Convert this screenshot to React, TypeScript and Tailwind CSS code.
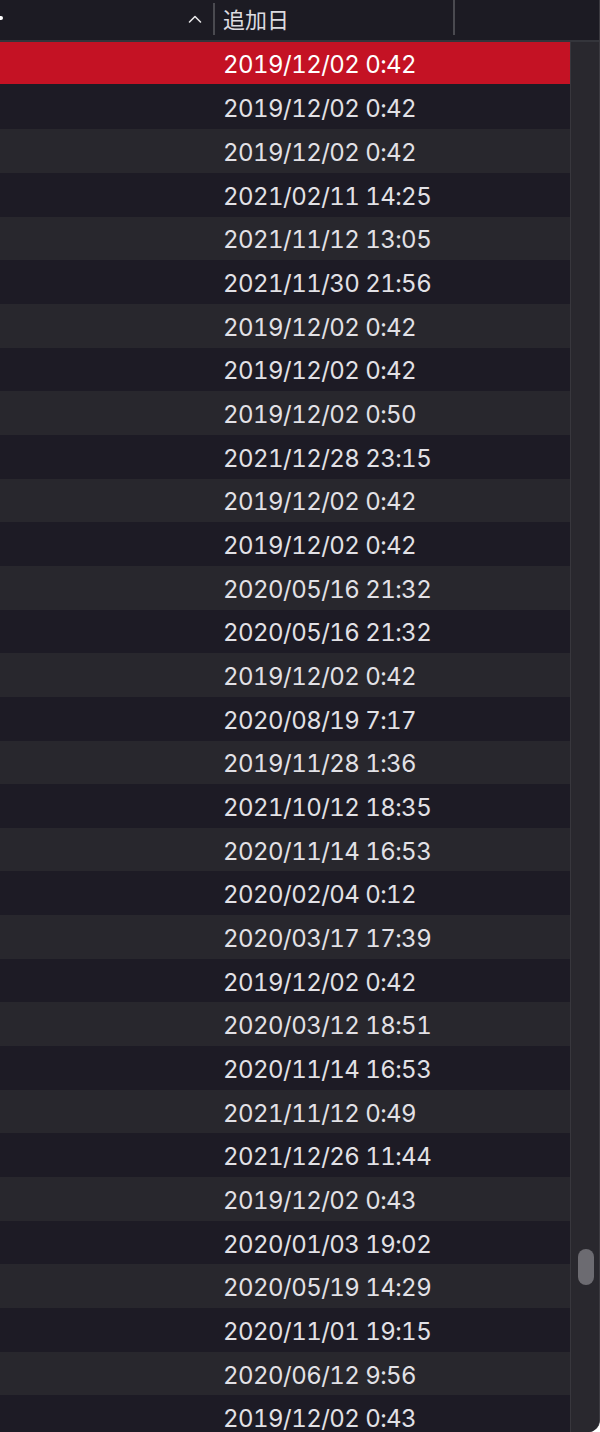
import React from 'react'

const DATES = [
  '2019/12/02 0:42',
  '2019/12/02 0:42',
  '2019/12/02 0:42',
  '2021/02/11 14:25',
  '2021/11/12 13:05',
  '2021/11/30 21:56',
  '2019/12/02 0:42',
  '2019/12/02 0:42',
  '2019/12/02 0:50',
  '2021/12/28 23:15',
  '2019/12/02 0:42',
  '2019/12/02 0:42',
  '2020/05/16 21:32',
  '2020/05/16 21:32',
  '2019/12/02 0:42',
  '2020/08/19 7:17',
  '2019/11/28 1:36',
  '2021/10/12 18:35',
  '2020/11/14 16:53',
  '2020/02/04 0:12',
  '2020/03/17 17:39',
  '2019/12/02 0:42',
  '2020/03/12 18:51',
  '2020/11/14 16:53',
  '2021/11/12 0:49',
  '2021/12/26 11:44',
  '2019/12/02 0:43',
  '2020/01/03 19:02',
  '2020/05/19 14:29',
  '2020/11/01 19:15',
  '2020/06/12 9:56',
  '2019/12/02 0:43',
]

function Row({ date, index }: { date: string; index: number }) {
  if (index === 0) {
    return (
      <div className="h-[43.67px] shrink-0 bg-[#1d1b25]">
        <div className="h-[41.6px] bg-[#c41224] flex items-center pl-[223px] pt-[4px] text-white">
          {date}
        </div>
      </div>
    )
  }
  return (
    <div
      className={`h-[43.67px] shrink-0 flex items-center pl-[223px] pt-[4px] text-[#e2e1e6] ${
        index % 2 === 0 ? 'bg-[#28272d]' : 'bg-[#1d1b25]'
      }`}>
      {date}
    </div>
  )
}

export default function App() {
  return (
    <div
      className="w-[600px] h-[1432px] overflow-hidden flex flex-col bg-[#1c1b23] rounded-br-[12px] border-r border-[#3c3b41]"
      style={{ fontFamily: 'Inter, "Noto Sans CJK JP", sans-serif' }}>
      {/* header */}
      <div className="h-[42px] shrink-0 flex items-start border-b-2 border-[#34353b] bg-[#1c1b23]">
        <div className="w-[213px] h-[35px] flex items-center justify-between relative">
          <span className="block w-[3px] h-[4px] bg-white rounded-r-full ml-0" />
          <svg width="14" height="10" viewBox="0 0 14 10" className="mr-[11px] mt-[2px]">
            <path d="M1.5 8 L7 2.5 L12.5 8" stroke="#e6e6e8" strokeWidth="1.6" fill="none" strokeLinecap="round" strokeLinejoin="round" />
          </svg>
        </div>
        <div className="w-[2px] h-[32px] mt-[3px] bg-[#4a4a50]" />
        <div className="w-[238px] h-[40px] flex items-center pl-[8px] text-[22px] text-[#dcdbe0]">追加日</div>
        <div className="w-[2px] h-[35px] bg-[#4a4a50]" />
        <div className="flex-1" />
      </div>

      {/* body */}
      <div className="flex flex-1 min-h-0">
        <div className="w-[570px] flex flex-col text-[24px] leading-none tabular-nums tracking-[-0.55px]">
          {DATES.map((d, i) => (
            <Row key={i} date={d} index={i} />
          ))}
        </div>
        <div className="flex-1 bg-[#29282e] border-l border-[#38373d] relative">
          <div className="absolute left-[7px] top-[1207px] w-[16px] h-[36px] rounded-full bg-[#6c6b71]" />
        </div>
      </div>
    </div>
  )
}
